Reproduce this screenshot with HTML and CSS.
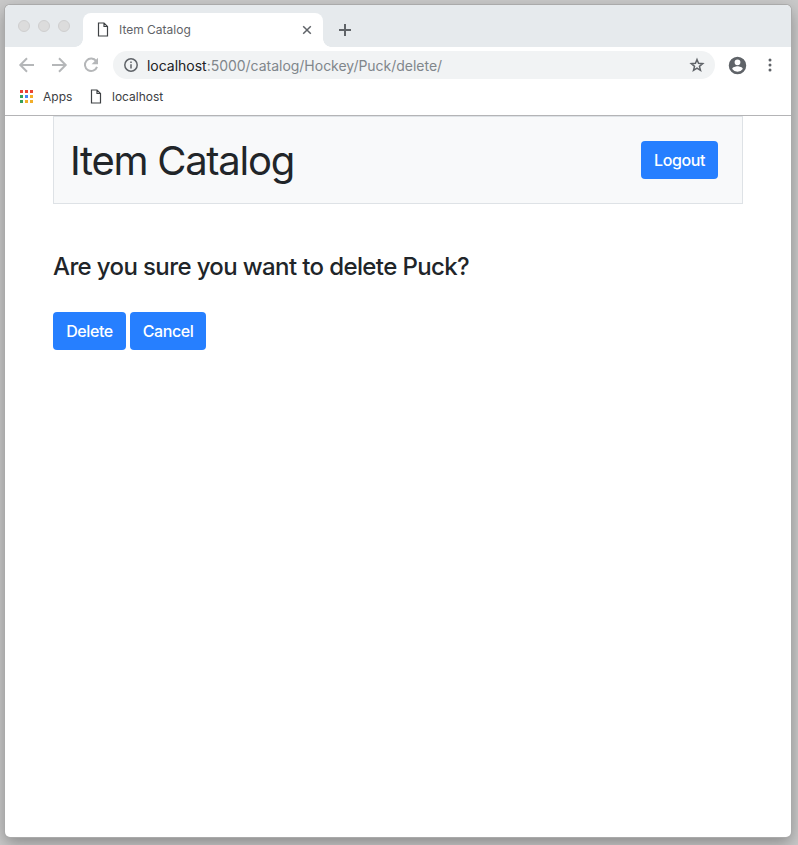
FILE: index.html
```html
<!DOCTYPE html>
<html lang="en">
<head>
<meta charset="utf-8">
<title>Item Catalog</title>
<link rel="stylesheet" href="styles.css">
</head>
<body>
<div class="window">
  <div class="tabstrip">
    <div class="lights"><i></i><i></i><i></i></div>
    <div class="tab">
      <svg class="file" width="12" height="15" viewBox="0 0 12 15"><path d="M1.500 1h5.500l3.500 3.500v9.500h-9zM7 1v3.500h3.500"/></svg>
      <span class="tab-title">Item Catalog</span>
      <svg class="close" width="10" height="10" viewBox="0 0 10 10"><path d="M1.200 1.200l7.600 7.600M8.800 1.200L1.200 8.800"/></svg>
    </div>
    <svg class="plus" width="12" height="12" viewBox="0 0 12 12"><path d="M6 0v12M0 6h12"/></svg>
  </div>
  <div class="toolbar">
    <svg class="nav" width="24" height="24" viewBox="0 0 24 24"><path d="M19 12H6M12 5.300L5.300 12l6.700 6.700"/></svg>
    <svg class="nav" width="24" height="24" viewBox="0 0 24 24"><path d="M5 12h13M12 5.300l6.700 6.700-6.700 6.700"/></svg>
    <svg class="nav" width="24" height="24" viewBox="0 0 24 24"><path d="M17.200 8.200A6.200 6.200 0 1 0 18 13.800"/><path class="head" d="M19 4.800v6.400h-6.400z"/></svg>
    <div class="address">
      <svg class="info" width="14" height="14" viewBox="0 0 14 14"><circle cx="7" cy="7" r="6.200"/><path d="M7 6.200v4.200M7 3.500v1.500"/></svg>
      <span class="url"><b>localhost</b>:5000/catalog/Hockey/Puck/delete/</span>
      <svg class="star" width="16" height="16" viewBox="0 0 24 24"><path d="M12 3.600l2.300 5.900 6.300.5-4.900 4 1.600 6.200L12 16.800l-5.300 3.400L8.300 14 3.400 10l6.300-.5z"/></svg>
    </div>
    <svg class="user" width="21" height="21" viewBox="0 0 24 24"><path d="M12 2a10 10 0 1 0 0 20 10 10 0 0 0 0-20zm0 3a3.300 3.300 0 1 1 0 6.600A3.300 3.300 0 0 1 12 5zm0 14.200a7.200 7.200 0 0 1-6-3.200c0-2 4-3.100 6-3.100s6 1.100 6 3.100a7.200 7.200 0 0 1-6 3.200z"/></svg>
    <svg class="more" width="4" height="14" viewBox="0 0 4 14"><circle cx="2" cy="2" r="1.500"/><circle cx="2" cy="7" r="1.500"/><circle cx="2" cy="12" r="1.500"/></svg>
  </div>
  <div class="bookmarks">
    <div class="apps"><i class="red"></i><i class="red"></i><i class="red"></i><i class="green"></i><i class="blue"></i><i class="yellow"></i><i class="green"></i><i class="yellow"></i><i class="yellow"></i></div>
    <span class="apps-label">Apps</span>
    <svg class="file" width="12" height="15" viewBox="0 0 12 15"><path d="M1.500 1h5.500l3.500 3.500v9.500h-9zM7 1v3.500h3.500"/></svg>
    <span class="host-label">localhost</span>
  </div>
  <main class="page">
    <header class="header"><h1>Item Catalog</h1><button class="btn logout">Logout</button></header>
    <h2>Are you sure you want to delete Puck?</h2>
    <div class="actions"><button class="btn delete">Delete</button><button class="btn cancel">Cancel</button></div>
  </main>
</div>
</body>
</html>
```
FILE: styles.css
```css
* { box-sizing: border-box; }
body { margin: 0; height: 845px; padding: 5px 7px 8px 5px; overflow: hidden; background: #c9c9c9; font-family: Inter, "Liberation Sans", sans-serif; }
.window { height: 832px; border-radius: 5px; overflow: hidden; background: #fff; box-shadow: 0 0 0 1px #aaa, 0 6px 16px rgba(0,0,0,.32); }
svg { display: block; flex: none; fill: none; }
span, h1, h2 { white-space: nowrap; }
.tabstrip { height: 42px; display: flex; background: #e6eaed; }
.lights { display: flex; gap: 8px; padding: 15px 0 0 13px; width: 78px; }
.lights i { width: 12px; height: 12px; border-radius: 50%; background: #dcdcdc; border: 1px solid #cfcfcf; }
.tab { position: relative; width: 240px; height: 34px; margin-top: 8px; border-radius: 8px 8px 0 0; background: #fff; display: flex; align-items: center; padding: 0 11px 1px 14px; }
.tab::before, .tab::after { content: ""; position: absolute; bottom: 0; width: 8px; height: 8px; }
.tab::before { left: -8px; background: radial-gradient(circle at 0 0, transparent 7.500px, #fff 8px); }
.tab::after { right: -8px; background: radial-gradient(circle at 100% 0, transparent 7.500px, #fff 8px); }
.file { stroke: #3f4245; stroke-width: 1.200; }
.tab-title { margin-left: 10px; flex: 1; font-size: 12px; color: #5f6368; }
.close { stroke: #5f6368; stroke-width: 1.500; }
.plus { margin: 19px 0 0 16px; stroke: #5f6368; stroke-width: 2; }
.toolbar { height: 36px; display: flex; align-items: center; padding-left: 10px; }
.nav { margin-right: 8px; stroke: #b5b7b9; stroke-width: 2; }
.nav .head { fill: #b5b7b9; stroke: none; }
.address { width: 602px; height: 28px; margin-left: 2px; border-radius: 14px; background: #f1f3f4; display: flex; align-items: center; padding: 0 10px 0 11px; }
.info { stroke: #5f6368; stroke-width: 1.500; }
.url { margin-left: 9px; flex: 1; font-size: 14px; letter-spacing: -.02px; color: #80868b; }
.url b { font-weight: 400; color: #202124; }
.star { stroke: #5f6368; stroke-width: 2.200; }
.user { margin-left: 11.500px; fill: #5f6368; }
.more { margin-left: 20px; fill: #5f6368; }
.bookmarks { height: 33px; border-bottom: 1px solid #b4b4b6; display: flex; align-items: center; padding: 2px 0 7px 15px; font-size: 12px; color: #3c4043; }
.apps { display: grid; grid-template-columns: repeat(3, 3px); gap: 2px; }
.apps i { height: 3px; }
.red { background: #ea4335; } .green { background: #34a058; } .blue { background: #4285f4; } .yellow { background: #f2ae29; }
.apps-label { margin-left: 10px; width: 47px; }
.host-label { margin-left: 10px; }
.page { padding: 0 48px; color: #212529; }
.header { height: 88px; border: 1px solid #dee2e6; background: #f8f9fa; display: flex; align-items: center; justify-content: space-between; padding: 0 24px 0 16px; }
h1, h2 { margin: 0; font-weight: 400; }
h1 { padding-top: 2px; font-size: 40px; line-height: 48px; letter-spacing: -1.280px; }
h2 { margin-top: 48px; font-size: 24px; line-height: 29px; font-weight: 500; letter-spacing: -.620px; }
.btn { height: 38px; padding: 0; border: 0; border-radius: 4px; background: #267fff; color: #fff; font: 500 16px/24px Inter, "Liberation Sans", sans-serif; letter-spacing: -.400px; }
.logout { width: 77px; } .delete { width: 73px; } .cancel { width: 76px; }
.actions { display: flex; gap: 4px; margin-top: 31px; }
```
